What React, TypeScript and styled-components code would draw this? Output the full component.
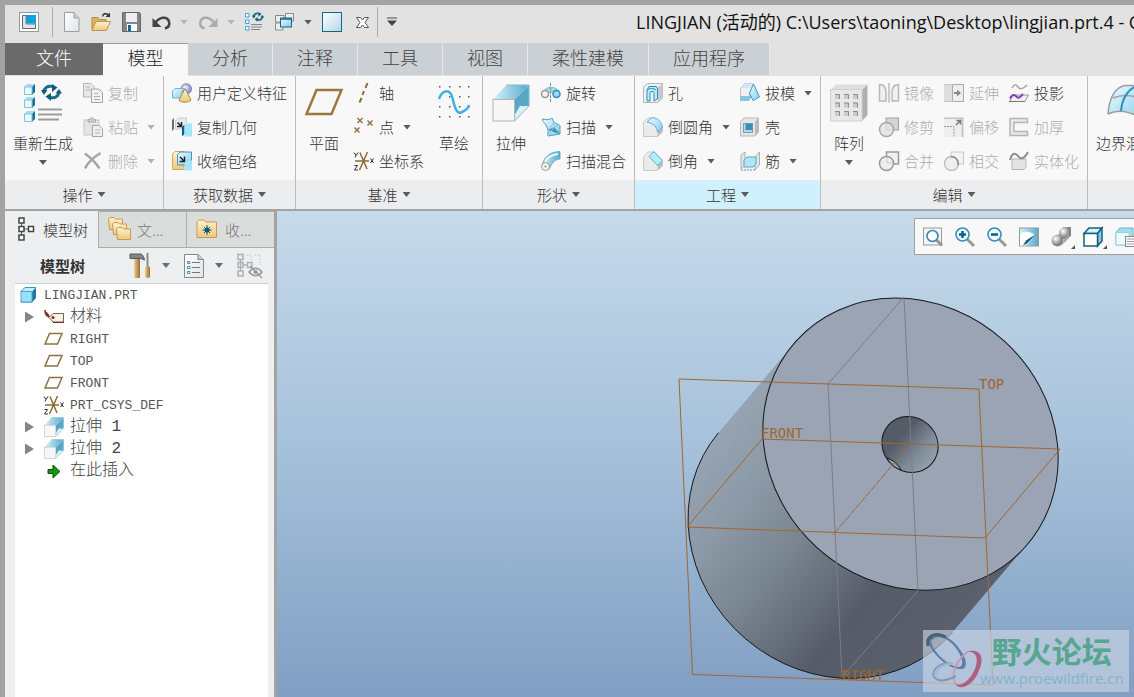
import React, { ReactNode } from "react";
import styled, { createGlobalStyle, css } from "styled-components";

const uiFont = `"Noto Sans CJK SC", "Open Sans", sans-serif`;

const GlobalStyle = createGlobalStyle`
  *, *::before, *::after { box-sizing: border-box; }
  html, body, #root { height: 100%; }
  body {
    margin: 0;
    overflow: hidden;
    font-family: ${uiFont};
    font-weight: 300;
    color: #333;
  }
  button {
    margin: 0;
    padding: 0;
    border: 0;
    background: none;
    font: inherit;
    color: inherit;
    white-space: nowrap;
  }
  svg { display: block; flex: none; overflow: visible; }
`;

const Window = styled.div`
  display: flex;
  flex-direction: column;
  height: 100vh;
  padding: 5px 0 0 5px;
  overflow: hidden;
  background: #a3a3a3;
`;

/* ---------- title bar ---------- */

const TitleBar = styled.header`
  display: grid;
  grid-template-columns: 631px 1fr;
  align-items: start;
  flex: none;
  height: 38px;
  background: #e2e2e2;
`;

const QuickAccess = styled.div`
  display: flex;
  align-items: center;
  gap: 10px;
  height: 34px;
  padding-left: 14px;
`;

const Divider = styled.span<{ $before?: number; $after?: number }>`
  width: 1px;
  height: 30px;
  margin-left: ${(p) => p.$before ?? 0}px;
  margin-right: ${(p) => p.$after ?? 0}px;
  background: #ababab;
`;

const Title = styled.h1`
  margin: 0;
  overflow: hidden;
  font-family: "Open Sans", "Noto Sans CJK SC", sans-serif;
  font-size: 18px;
  font-weight: 400;
  line-height: 34px;
  color: #111;
  white-space: nowrap;
`;

const IconButton = styled.button`
  display: flex;
  flex: none;
`;

const CaretButton = styled.button<{ $dim?: boolean }>`
  flex: none;
  width: 8px;
  height: 20px;
  margin-left: -1px;
  color: ${(p) => (p.$dim ? "#b5b5b5" : "#5b5b5b")};
`;

const Caret = styled.i`
  display: block;
  flex: none;
  width: 8px;
  height: 5px;
  background: currentColor;
  clip-path: polygon(0 0, 100% 0, 50% 100%);
`;

/* ---------- ribbon ---------- */

const TabBar = styled.nav`
  display: flex;
  flex: none;
  height: 33px;
  background: #e2e2e2;
`;

const Tab = styled.button<{ $kind?: "file" | "active"; $wide?: boolean }>`
  flex: none;
  width: ${(p) => (p.$wide ? 121 : 85)}px;
  height: 32px;
  padding-bottom: 4px;
  border-right: 1px solid #e6e8ea;
  background: #cbd0d4;
  font-size: 18px;
  line-height: 24px;
  color: #444;
  ${(p) =>
    p.$kind === "file" &&
    css`
      width: 98px;
      border: 0;
      background: #6a6a6a;
      color: #fff;
    `}
  ${(p) =>
    p.$kind === "active" &&
    css`
      height: 33px;
      padding-bottom: 6px;
      border: 0;
      border-top: 1px solid #9c9c9c;
      background: #f8f8f8;
      color: #222;
    `}
`;

const Ribbon = styled.section`
  display: flex;
  flex: none;
  height: 133px;
  background: #f8f8f8;
  overflow: hidden;
`;

const GroupBox = styled.div<{ $width: number }>`
  display: flex;
  flex-direction: column;
  flex: none;
  width: ${(p) => p.$width}px;
  border-right: 1px solid #bcbcbc;
`;

const GroupBody = styled.div`
  display: flex;
  flex: 1;
  gap: 10px;
  padding-left: 8px;
`;

const GroupLabel = styled.button<{ $hot?: boolean }>`
  display: flex;
  align-items: center;
  justify-content: center;
  gap: 5px;
  flex: none;
  height: 29px;
  background: ${(p) => (p.$hot ? "#d1f0fe" : "#ecedef")};
  font-size: 15px;
  ${Caret} { color: #5b5b5b; }
`;

const ButtonColumn = styled.div`
  display: grid;
  grid-template-rows: repeat(3, 34px);
  align-content: start;
  justify-items: start;
`;

const SmallButton = styled.button`
  display: flex;
  align-items: center;
  gap: 5px;
  font-size: 15px;
  line-height: 20px;
  &:disabled { color: #adadad; }
  ${Caret} { margin-left: 4px; color: #5b5b5b; }
  &:disabled ${Caret} { color: #b0b0b0; }
`;

const LargeButton = styled.button<{ $width: number }>`
  display: flex;
  flex-direction: column;
  align-items: center;
  flex: none;
  align-self: start;
  width: ${(p) => p.$width}px;
  padding-top: 8px;
  font-size: 15px;
  line-height: 20px;
  svg { margin-bottom: 11px; }
  ${Caret} { margin-top: 7px; color: #5b5b5b; }
`;

/* ---------- work area ---------- */

const WorkArea = styled.main`
  display: flex;
  flex: 1;
  min-height: 0;
  margin-top: 2px;
`;

const Sidebar = styled.aside`
  display: flex;
  flex-direction: column;
  flex: none;
  width: 269px;
  margin-right: 3px;
  background: #eeeff1;
`;

const SideTabs = styled.div`
  display: flex;
  flex: none;
  height: 37px;
`;

const SideTab = styled.button<{ $active?: boolean; $width: number }>`
  display: flex;
  align-items: center;
  gap: ${(p) => (p.$active ? 9 : 5)}px;
  width: ${(p) => p.$width}px;
  padding-left: ${(p) => (p.$active ? 13 : 9)}px;
  padding-bottom: 1px;
  border: ${(p) => (p.$active ? "0" : "1px solid #adadad")};
  border-right-width: 0;
  background: ${(p) => (p.$active ? "#eeeff1" : "#dbdddd")};
  color: ${(p) => (p.$active ? "#333" : "#777")};
  font-size: 15px;
`;

const TreeBar = styled.div`
  display: flex;
  align-items: center;
  flex: none;
  height: 35px;
  padding-left: 35px;
  h2 {
    flex: none;
    width: 89px;
    margin: 0;
    font-size: 15px;
    font-weight: 700;
    line-height: 20px;
  }
`;

const TreeTool = styled.button`
  display: flex;
  align-items: center;
  flex: none;
  gap: 11px;
  margin-right: 14px;
  ${Caret} { color: #6b6b6b; }
`;

const Tree = styled.ul`
  flex: 1;
  margin: 0 6px 0 10px;
  padding: 0;
  border-top: 1px solid #cfcfcf;
  background: #fff;
  list-style: none;
`;

const TreeItem = styled.li<{ $root?: boolean }>`
  display: flex;
  align-items: center;
  gap: 6px;
  height: 22px;
  padding-left: ${(p) => (p.$root ? 5 : 10)}px;
  font-family: "Liberation Mono", "Noto Sans CJK SC", monospace;
  font-size: 13px;
  white-space: pre;
  color: #555;
  b {
    font-size: 16px;
    font-weight: 300;
    line-height: 22px;
    color: #444;
  }
`;

const Expander = styled.button<{ $visible: boolean }>`
  width: 9px;
  height: 11px;
  margin-right: 4px;
  background: ${(p) => (p.$visible ? "#858585" : "transparent")};
  clip-path: polygon(0 0, 100% 50%, 0 100%);
`;

const Viewport = styled.section`
  position: relative;
  flex: 1;
  min-width: 0;
  overflow: hidden;
  background: linear-gradient(#c6dbea, #a5c0da 50%, #819fc3);
`;

const Scene = styled.svg`
  width: 100%;
  height: 100%;
`;

const ViewTools = styled.div`
  position: absolute;
  top: 7px;
  right: 0;
  display: flex;
  align-items: center;
  gap: 12px;
  width: 220px;
  height: 37px;
  padding-left: 8px;
  overflow: hidden;
  border: 1px solid #9f9f9f;
  border-right: 0;
  background: #f8f8f8;
`;

const Watermark = styled.div`
  position: absolute;
  right: 5px;
  bottom: 5px;
  display: flex;
  width: 206px;
  height: 62px;
  background: rgba(206, 217, 231, 0.62);
`;

const WatermarkText = styled.div`
  display: flex;
  flex-direction: column;
  align-items: center;
  margin-left: -3px;
  strong {
    height: 37px;
    font-size: 30px;
    font-weight: 700;
    line-height: 40px;
    color: #58a690;
  }
  span {
    font-family: "Open Sans", sans-serif;
    font-size: 15px;
    font-weight: 400;
    line-height: 22px;
    color: #86b2c8;
  }
`;

/* ---------- icons ---------- */

const Svg = ({ w = 20, h = 20, children }: { w?: number; h?: number; children: ReactNode }) => (
  <svg width={w} height={h} viewBox={`0 0 ${w} ${h}`} fill="none" aria-hidden="true">
    {children}
  </svg>
);

const Defs = styled.svg`
  position: absolute;
`;

const Gradients = () => (
  <Defs width="0" height="0" aria-hidden="true">
    <defs>
      <linearGradient id="paper" x1="0" y1="0" x2="1" y2="1"><stop stopColor="#fff" /><stop offset="1" stopColor="#dfe5e9" /></linearGradient>
      <linearGradient id="sand" x1="0" y1="0" x2="0" y2="1"><stop stopColor="#fff3cf" /><stop offset="1" stopColor="#edc77c" /></linearGradient>
      <linearGradient id="ice" x1="0" y1="0" x2="1" y2="1"><stop stopColor="#f0fbff" /><stop offset="1" stopColor="#7fcdec" /></linearGradient>
      <linearGradient id="sea" x1="0" y1="0" x2="1" y2="0"><stop stopColor="#d5f3fd" /><stop offset="1" stopColor="#5aa9c9" /></linearGradient>
      <linearGradient id="pane" x1="0" y1="0" x2="1" y2="1"><stop stopColor="#fff" /><stop offset="1" stopColor="#b5d6e4" /></linearGradient>
      <linearGradient id="wood" x1="0" y1="0" x2="1" y2="0"><stop stopColor="#f0d196" /><stop offset="1" stopColor="#9c6b2d" /></linearGradient>
      <radialGradient id="ball" cx=".35" cy=".35"><stop stopColor="#fff" /><stop offset="1" stopColor="#858585" /></radialGradient>
      <radialGradient id="lilac" cx=".4" cy=".4"><stop stopColor="#fff" /><stop offset="1" stopColor="#8890d0" /></radialGradient>
    </defs>
  </Defs>
);

const MiniCube = ({ x, y, s = 8 }: { x: number; y: number; s?: number }) => (
  <g transform={`translate(${x} ${y})`}>
    <path d={`M0 3L3 0H${s + 3}L${s} 3Z`} fill="#a6dcf2" />
    <path d={`M${s} 3L${s + 3} 0V${s}L${s} ${s + 3}Z`} fill="#1f6f92" />
    <path d={`M.5 3H${s}V${s + 2.5}H.5Z`} fill="#e9faff" stroke="#7ec4de" />
  </g>
);

const cycle = (
  <>
    <path d="M2.500 8.500C3 4 6.500 1.500 11 2.500" stroke="#1d6c8e" strokeWidth="3" />
    <path d="M11 0L16.500 3.500L11 8Z" fill="#125a7a" />
    <path d="M18 8C17.500 12.500 14 14.500 9.500 13.500" stroke="#1d6c8e" strokeWidth="3" />
    <path d="M10 9L4.500 12.500L10 17Z" fill="#125a7a" />
    <path d="M0 6H6.500L3 11Z" fill="#125a7a" />
    <path d="M14.500 9.500L18 5L21 9.500Z" fill="#125a7a" />
  </>
);

const regenLarge = (
  <Svg w={38} h={38}>
    <MiniCube x={0} y={0} /><MiniCube x={0} y={13} /><MiniCube x={0} y={27} />
    <g transform="translate(17 0)">{cycle}</g>
    <path d="M14 25.500H38M14 30.500H38M14 35.500H35" stroke="#9c9c9c" strokeWidth="2" />
  </Svg>
);
const planeLarge = (
  <Svg w={38} h={38}><path d="M11.500 6H36.500L26.500 30H1.500Z" stroke="#9a7a3c" strokeWidth="2.500" /></Svg>
);
const dots = [2, 12, 22, 32].flatMap((y) => [2, 12, 22, 31].map((x) => <rect key={`${x}-${y}`} x={x - 1} y={y} width="1.500" height="1.500" fill="#555" />));
const sketchLarge = (
  <Svg w={32} h={38}>{dots}<path d="M1 15C4 6 12 4 14.500 14C17 25 19 30 23 28.500C27 27 30 25 31 21" stroke="#3bb0e2" strokeWidth="2.500" /></Svg>
);
const extrudeShape = (
  <>
    <path d="M1 15.500L14.500 1H37L22.500 15.500Z" fill="url(#sea)" />
    <path d="M22.500 15.500L37 1V22L22.500 37Z" fill="#d8f3fd" />
    <path d="M22.500 15.500L37 1V22L22.500 31Z" fill="#5aa7c5" />
    <path d="M22.500 37V31L28 22H37Z" fill="#d3f2fd" />
    <path d="M22.500 37L37 22" stroke="#9fb8c2" />
    <path d="M14.500 1H37V22" stroke="#79bbd4" />
    <path d="M14.500 1V15" stroke="#a5d6e8" />
    <rect x="1" y="15.500" width="21.500" height="21.500" fill="#f7f7f7" stroke="#b3b3b3" />
  </>
);
const extrudeLarge = <Svg w={38} h={38}>{extrudeShape}</Svg>;
const patternLarge = (
  <Svg w={38} h={38}>
    <path d="M.5 6L6 .5H37.500L32 6Z" fill="#dedede" />
    <path d="M32 6L37.500 .5V31L32 37Z" fill="#b0b0b0" />
    <rect x=".5" y="5.500" width="31.500" height="31.500" fill="#e8e8e8" stroke="#d0d0d0" />
    {[10, 18.5, 27].flatMap((y) => [5, 14, 23].map((x) => (
      <g key={`${x}-${y}`}><rect x={x} y={y} width="5" height="5" fill="#cbcbcb" /><path d={`M${x} ${y + 0.5}H${x + 4.5}V${y + 5}`} stroke="#8c8c8c" /></g>
    )))}
  </Svg>
);
const blendLarge = (
  <Svg w={38} h={38}>
    <path d="M1 30C2 15 8 3 18 1.500H38V38C28 29 14 24 1 30Z" fill="url(#ice)" />
    <path d="M1 30C2 15 8 3 18 1.500H38M1 30C14 24 28 29 38 38M6 14C18 9 30 12 38 18" stroke="#9c9c9c" strokeWidth="1.500" />
    <path d="M14 27C15 15 20 6 30 1.500" stroke="#2f93bd" strokeWidth="2" />
  </Svg>
);

const flyout = <path d="M24 18V22H20Z" fill="#555" />;

const icons = {
  app: <Svg><rect x=".5" y=".5" width="19" height="19" fill="#fff" stroke="#999" /><path d="M3.500 3.500H16.500V16.500H3.500Z" fill="#e3e6e8" stroke="#666" /><path d="M7 3V12H17" stroke="#777" /><rect x="7" y="3" width="10" height="8.500" fill="#119fe0" /></Svg>,
  fresh: <Svg><path d="M3.500 .5H13L18 6V19.500H3.500Z" fill="url(#paper)" stroke="#9d9d9d" /><path d="M13 .5V6H18" fill="#ccd" stroke="#9d9d9d" /></Svg>,
  open: <Svg><path d="M1 18V5.500H7L8.500 7.500H15V10" fill="#e2b35d" stroke="#b98b3b" /><path d="M1 18.500L5 9.500H19.500L15.500 18.500Z" fill="url(#sand)" stroke="#c2954c" /><path d="M11.500 4.500C12 1.500 14.500 1 17 2.500" stroke="#333" strokeWidth="1.500" /><path d="M19 .5V5H14.500Z" fill="#333" /></Svg>,
  save: <Svg><path d="M1.500 .5H18.500L19.500 2V19.500H1.500Z" fill="#858585" stroke="#666" /><rect x="5" y="1" width="11" height="9" fill="#eceef0" /><rect x="6" y="12" width="10" height="7" fill="#fff" /><rect x="7" y="13" width="3" height="6" fill="#0e6aa0" /></Svg>,
  undo: <Svg><path d="M4 11.500C8 5 16 3.500 18 9.500C19 13 17 15.500 14 16.500" stroke="#444" strokeWidth="2.500" /><path d="M1.500 6V15H10.500Z" fill="#444" /></Svg>,
  redo: <Svg><path d="M16.500 11.500C12.500 5 4.500 3.500 2.500 9.500C1.500 13 3.500 15.500 6.500 16.500" stroke="#acacac" strokeWidth="2.500" /><path d="M19.500 6V15H10.500Z" fill="#acacac" /></Svg>,
  regen: <Svg><path d="M.5 1.500H4V5H.5ZM.5 8H4V11.500H.5ZM.5 14.500H4V18H.5Z" fill="#fff" stroke="#3aa4d3" /><g transform="translate(7 0) scale(.58)">{cycle}</g><path d="M6 12.500H17M6 15H17M6 17.500H15" stroke="#858585" /></Svg>,
  windows: <Svg><path d="M.5 3.500H9V10H.5ZM10.500 1.500H18.500V9H10.500ZM.5 11H8V18H.5Z" fill="#eee" stroke="#8b8b8b" /><rect x="5.500" y="6" width="11" height="9" fill="url(#ice)" stroke="#1a6585" /><path d="M5 7H17" stroke="#1a6585" strokeWidth="1.500" /></Svg>,
  pane: <Svg><rect x=".5" y=".5" width="19" height="19" fill="url(#pane)" stroke="#176488" /></Svg>,
  close: <Svg><path d="M4.500 5.500H8.500L10.500 8L12.500 5.500H16.500L13 10.500L16.500 15.500H12.500L10.500 13L8.500 15.500H4.500L8 10.500Z" fill="#fff" stroke="#555" /></Svg>,
  copy: <Svg><path d="M.5 .5H8L11 3.500V14H.5Z" fill="#e8e8e8" stroke="#b5b5b5" /><path d="M8.500 6H16L19.500 9.500V19.500H8.500Z" fill="#f1f1f1" stroke="#a5a5a5" /><path d="M2.500 4H7M2.500 7H8M11 10.500H15M11 13.500H17M11 16.500H17" stroke="#b0b0b0" /></Svg>,
  paste: <Svg><rect x="1" y="3" width="15" height="15" fill="#e4e4e4" stroke="#c5c5c5" /><path d="M5 5V2.500H7C7 0 10.500 0 10.500 2.500H12.500V5Z" fill="#cfcfcf" stroke="#aaa" /><path d="M9.500 8.500H16L19.500 12V19.500H9.500Z" fill="#f1f1f1" stroke="#a5a5a5" /><path d="M12 13H17M12 16H17" stroke="#b0b0b0" /></Svg>,
  remove: <Svg><path d="M2 2.500C8 7 13 12 16.500 17.500M17.500 2C11 6 5 11 2 17.500" stroke="#a6a6a6" strokeWidth="2.500" /></Svg>,
  udf: <Svg><path d="M9 6C9 -1 19.500 -1 19.500 6C19.500 11 14 12 11 10Z" fill="url(#lilac)" stroke="#888fbf" /><path d="M.5 8L3 5.500H12L10 8V15H.5Z" fill="url(#ice)" stroke="#6cbad6" /><path d="M13 5.500L19 17C17 20 9 20 7 17Z" fill="url(#sand)" stroke="#b08949" /></Svg>,
  copyGeom: <Svg><path d="M0 3L2 1V12L0 14Z" fill="#5e6f7a" /><path d="M3.500 4L6.500 1H14.500V9L11.500 12H3.500Z" fill="#e8e8e8" stroke="#cdcdcd" /><path d="M5.500 5.500L9 9M9.500 5V9.500H5" stroke="#222" strokeWidth="1.500" /><path d="M10 10L12.500 7.500V17L10 19.500Z" fill="#0f5d86" /><path d="M12.500 8.500L14.500 6.500H20V19.500H12.500Z" fill="#a5e6fb" /></Svg>,
  shrink: <Svg><path d="M.5 3L3 .5H12V18.500H.5Z" fill="url(#sand)" stroke="#d3aa5c" /><path d="M5.500 3.500L8 1H19.500V9L17 12V14H5.500Z" fill="url(#ice)" stroke="#4795b5" /><path d="M8 6L12 10M12.500 5.500V10.500H7.500" stroke="#222" strokeWidth="1.500" /><path d="M12.500 12L14.500 9.500H20V19.500H12.500Z" fill="#a5e6fb" /></Svg>,
  axis: <Svg><path d="M13.500 0L11.500 5M10 8L8.500 12M7.500 15L5.500 19.500" stroke="#8a6c35" strokeWidth="2" /></Svg>,
  point: <Svg><path d="M3.500 1L8.500 6M8.500 1L3.500 6M13.500 3.500L18.500 8.500M18.500 3.500L13.500 8.500M.5 10.500L5.500 15.500M5.500 10.500L.5 15.500" stroke="#927443" strokeWidth="1.500" /></Svg>,
  csys: <Svg><path d="M1 10H15M5.500 19L13.500 1M6 1.500L13 18" stroke="#8a6c35" strokeWidth="1.500" /><path d="M0 1.500L2 4.500L4 1.500M2 4.500L1 6.500M.5 14.500H3.500L.5 19H4M16.500 7.500L19.500 12M19.500 7.500L16.500 12" stroke="#333" /></Svg>,
  revolve: <Svg><path d="M3 8C5 3 15 3 17 8L13 10C11 8.500 9 8.500 7 10Z" fill="#a5d6e8" stroke="#7fbcd2" /><circle cx="4" cy="11" r="3.500" fill="#f4f4f4" stroke="#999" strokeWidth="1.500" /><circle cx="15.500" cy="11" r="3.500" fill="#9adcf5" stroke="#2e8fb5" strokeWidth="1.500" /><path d="M9.500 0V20" stroke="#888" strokeDasharray="3 1" /></Svg>,
  sweep: <Svg><path d="M1.500 2C6 3 9 3 11 1L13 5.500L19 8.500V17L7 19V13C6 9 4 6 1.500 4Z" fill="url(#ice)" stroke="#4f9ebb" /><path d="M7 13L13 10L19 17Z" fill="#3d93b4" /><path d="M7 13L13 5.500V10M7 19L13 10L19 8.500" stroke="#8fcade" /></Svg>,
  sweepBlend: <Svg><path d="M1 15C3 6 8 1 19 .5V8C13 8 11 13 8 18Z" fill="url(#sea)" stroke="#6aafc9" /><path d="M4 12C6 6 10 4 17 3" stroke="#f0fcff" strokeWidth="2" /><circle cx="4.500" cy="15.500" r="4" fill="#f2f2f2" stroke="#999" /><circle cx="4.500" cy="15.500" r="1" fill="#888" /></Svg>,
  hole: <Svg><path d="M.5 4L4.500 .5H19.500V15L15 19.500H.5Z" fill="#efefef" stroke="#b5b5b5" /><path d="M15 4.500L19.500 .5V15L15 19.500Z" fill="#c3c9cc" /><path d="M4 18V7L6 3.500H13.500L14.500 6V16L11 18V9.500C10 8 8 8 7 9.500V18Z" fill="#b9eafa" stroke="#2f8fb4" /><path d="M4 7C6 5 11 5 13 7" stroke="#2f8fb4" /></Svg>,
  round: <Svg><path d="M.5 5L5 1H9L19.500 10V15L14.500 19.500H.5Z" fill="#ebebeb" stroke="#cacaca" /><path d="M14.500 14.500L19.500 10V15L14.500 19.500Z" fill="#bdbdbd" /><path d="M4 5L9 .5C15 1 19 5 19.500 10.500L14.500 15C14 10 10 6 4 5Z" fill="url(#ice)" stroke="#5faecb" /></Svg>,
  chamfer: <Svg><path d="M.5 5.500L5 1H11L19.500 10V15L14.500 19.500H.5Z" fill="#ebebeb" stroke="#cacaca" /><path d="M14.500 14.500L19.500 10V15L14.500 19.500Z" fill="#bdbdbd" /><path d="M6 5.500L11 .5L19.500 9.500L14.500 14.500Z" fill="#b5eafb" stroke="#5faecb" /></Svg>,
  draft: <Svg><path d="M.5 6L4.500 .5H13L9 14H.5Z" fill="#f0f0f0" stroke="#c0c0c0" /><path d="M4.500 .5H13L11 5H1.500Z" fill="#c9ecf8" /><path d="M0 13H12L9 18H0Z" fill="#86c5dc" /><path d="M13.500 1L19.500 14L13 17.500L9.500 10Z" fill="url(#ice)" stroke="#3d9cc0" /></Svg>,
  shell: <Svg><path d="M.5 4.500L4 1H18.500V15L15 19H.5Z" fill="#e6e6e6" stroke="#b8b8b8" /><path d="M15 4.500L18.500 1V15L15 19Z" fill="#bbb" /><rect x="3.500" y="6.500" width="9" height="9" fill="#a9dcf0" stroke="#8b9ba3" /><rect x="5.500" y="6.500" width="7" height="6.500" fill="#3c8fb4" /></Svg>,
  rib: <Svg><path d="M1 4L5 1V14L1 18ZM15 6L19.500 1V14L15 19Z" fill="#e5e5e5" stroke="#b0b0b0" /><path d="M1 19H15" stroke="#888" strokeDasharray="2 1" /><path d="M4 9L7 6H16V13L13 16H4Z" fill="#b1e6f8" stroke="#53a6c6" /></Svg>,
  mirror: <Svg><path d="M.5 1.500C5 1.500 7 5 7 10V18H.5ZM19.500 1.500C15 1.500 13 5 13 10V18H19.500Z" fill="#f0f0f0" stroke="#b8b8b8" strokeWidth="1.500" /><path d="M10 0V20" stroke="#a0a0a0" /></Svg>,
  trim: <Svg><rect x="7" y="1" width="12.500" height="12" fill="#d5d5d5" stroke="#a0a0a0" /><circle cx="7.500" cy="12.500" r="7" fill="#e3e3e3" fillOpacity=".8" stroke="#a8a8a8" strokeWidth="1.500" /></Svg>,
  merge: <Svg><rect x="7.500" y="1" width="12" height="12" fill="#efefef" stroke="#999" strokeWidth="1.500" /><circle cx="7.500" cy="12.500" r="7" fill="#eee" stroke="#999" strokeWidth="1.500" /><path d="M8 7V12H13" stroke="#ccc" /></Svg>,
  extend: <Svg><rect x="0" y="1" width="9" height="18" fill="#dedede" /><rect x="8.500" y="1.500" width="11" height="17" fill="#eee" stroke="#aaa" /><path d="M0 1.500H9M0 18.500H9" stroke="#c5c5c5" /><path d="M10 10H14" stroke="#888" strokeWidth="2" /><path d="M13 6.500L17 10L13 13.500Z" fill="#888" /></Svg>,
  offset: <Svg><path d="M0 1.500H18.500V20" stroke="#c3c3c3" strokeWidth="2" /><rect x="0" y="2" width="17" height="18" fill="#efefef" /><path d="M0 9.500H10V20" stroke="#999" strokeDasharray="2 1" /><path d="M12 8L16 4M12.500 3.500H16.500V7.500" stroke="#777" strokeWidth="1.500" /></Svg>,
  intersect: <Svg><rect x="7" y="1" width="12.500" height="12" fill="#f3f3f3" stroke="#c9c9c9" /><circle cx="7.500" cy="12.500" r="7" fill="#efefef" stroke="#c0c0c0" strokeWidth="1.500" /><path d="M6.500 5.500C12 5.500 14.500 9 14 14" stroke="#888" strokeWidth="1.500" /></Svg>,
  project: <Svg><path d="M3 5C5 1 7 1 9 4C11 7 14 6 18 2" stroke="#a5a5a5" strokeWidth="1.500" /><path d="M1 18.500L3 12H19.500L16 18.500Z" fill="#eee" stroke="#999" /><path d="M0 18.500H16" stroke="#777" /><path d="M1 15.500C4 10 6 12 8 14C10 16 12 13 14 11" stroke="#7b43b5" strokeWidth="2" /></Svg>,
  thicken: <Svg><path d="M1 1.500H18.500V5.500H5V14.500H18.500V18.500H1Z" fill="#e9e9e9" stroke="#b5b5b5" strokeWidth="1.500" /></Svg>,
  solidify: <Svg><path d="M3 8H17V16L15 18.500H3Z" fill="#e4e4e4" stroke="#b5b5b5" /><path d="M1 9C3 2 6 1 9 5C12 9 15 8 19 1" stroke="#8c8c8c" strokeWidth="2" /></Svg>,
  zoomFit: <Svg><rect x=".5" y="1" width="18" height="17" fill="#f4f4f4" stroke="#999" /><path d="M13.500 13L19 18.500" stroke="#959595" strokeWidth="3" /><circle cx="9.500" cy="9" r="5.500" fill="#fff" stroke="#2f86aa" strokeWidth="1.500" /></Svg>,
  zoomIn: <Svg><path d="M12 12L19 19" stroke="#999" strokeWidth="3" /><circle cx="7.500" cy="7.500" r="6.500" fill="#eafaff" stroke="#3a8db0" strokeWidth="1.500" /><path d="M4 7.500H11M7.500 4V11" stroke="#0f5e83" strokeWidth="2.500" /></Svg>,
  zoomOut: <Svg><path d="M12 12L19 19" stroke="#999" strokeWidth="3" /><circle cx="7.500" cy="7.500" r="6.500" fill="#eafaff" stroke="#3a8db0" strokeWidth="1.500" /><path d="M4 7.500H11" stroke="#0f5e83" strokeWidth="2.500" /></Svg>,
  repaint: <Svg><rect x=".5" y="1" width="19" height="18" fill="url(#sea)" stroke="#999" /><path d="M1 7C6 3 12 5 16 8L7 18.500H1Z" fill="#fff" /><path d="M17 7L8 16.500L4 18.500L7 13.500Z" fill="#145f83" /></Svg>,
  shading: <Svg><path d="M8 4L12 0H20V9L16 12H8Z" fill="url(#ball)" /><circle cx="6.500" cy="13.500" r="6" fill="url(#ball)" /><path d="M13 12L18 7V11L12 17Z" fill="#a5a5a5" />{flyout}</Svg>,
  box: <Svg><path d="M1 6.500L6 1H19L14.500 6.500Z" fill="#d5f1fb" stroke="#14607f" strokeWidth="1.500" /><path d="M14.500 6.500L19 1V14L14.500 19Z" fill="#8cc8df" stroke="#14607f" strokeWidth="1.500" /><rect x="1" y="6.500" width="13.500" height="12.500" fill="#fff" stroke="#14607f" strokeWidth="1.500" />{flyout}</Svg>,
  views: <Svg w={22}><path d="M1 5.500L5 1H18V14L14 18H1Z" fill="#a5dcf0" stroke="#6bb5d0" /><path d="M1 5.500H14V18H1Z" fill="#effbff" stroke="#9bd0e4" /><rect x="10.500" y="9.500" width="11" height="10" fill="#fff" stroke="#888" /><path d="M12 12H20M12 14.500H20M12 17H20" stroke="#999" /></Svg>,
  tree: <Svg w={16} h={24}><path d="M3.500 6V18M6 12H11" stroke="#555" /><path d="M1 1H6V6H1ZM1 9.500H6V14.500H1ZM1 18H6V23H1ZM10.500 9.500H15.500V14.500H10.500Z" fill="#fff" stroke="#444" strokeWidth="1.500" /></Svg>,
  folders: <Svg w={24} h={24}>{[[0, 0], [4, 5], [8, 10]].map(([x, y]) => <path key={x} d={`M${x + 0.5} ${y + 2}L${x + 2} ${y + 0.5}H${x + 6}L${x + 7.5} ${y + 2}H${x + 14.5}V${y + 12.5}H${x + 1.5}Z`} fill="url(#sand)" stroke="#c69a52" />)}</Svg>,
  favorites: <Svg w={24} h={20}><path d="M1 2.500L2.500 1H8L10 3H20.500V18.500H1Z" fill="url(#sand)" stroke="#c69a52" /><path d="M11 6V16M6.500 11H15.500M8 8L14 14M14 8L8 14" stroke="#0f5575" /><circle cx="11" cy="11" r="2.500" fill="#0f5575" /></Svg>,
  hammer: <Svg w={22} h={26}><rect x="5" y="5" width="6" height="20" rx="1" fill="url(#wood)" /><path d="M1 1H12C14 2 15 4 15.500 7L12 5.500H1Z" fill="#80868b" stroke="#55595c" /><path d="M18.500 0V13" stroke="#8b8b8b" strokeWidth="2" /><rect x="16" y="13" width="5" height="12" rx="2" fill="url(#wood)" /></Svg>,
  list: <Svg w={20} h={26}><path d="M.5 1.500H14L19.500 6.500V24.500H.5Z" fill="url(#paper)" stroke="#888" /><path d="M14 1.500V6.500H19.500" stroke="#888" fill="#ccc" /><path d="M8 9.500H16M8 14.500H16M8 19.500H16" stroke="#777" /><path d="M3.500 8.500H6V10.500H3.500ZM3.500 13.500H6V15.500H3.500ZM3.500 18.500H6V20.500H3.500Z" stroke="#4b91ad" fill="#fff" /></Svg>,
  hidden: <Svg w={26} h={26}><path d="M1 1.500H6V6.500H1ZM1 9.500H6V14.500H1ZM1 18H6V23H1ZM10.500 9.500H15V14.500H10.500ZM3.500 6.500V18M6 12H10.500" stroke="#b0b0b0" strokeWidth="1.500" /><path d="M9 2H14V7M17 2H23V12" stroke="#ccc" strokeDasharray="2 1" /><path d="M12 19C16 14 21 14 25 19C21 24 16 24 12 19Z" fill="#eee" stroke="#999" strokeWidth="1.500" /><circle cx="18.500" cy="19" r="2" fill="#999" /><path d="M13 13L25 25" stroke="#999" strokeWidth="1.500" /></Svg>,
  part: <Svg w={18} h={18}><path d="M1 5.500L5 1.500H16V12L12 16.500H1Z" fill="#1c789c" /><path d="M1 5.500L5 1.500H16L12.500 5.500Z" fill="#c2efff" stroke="#3d97b8" /><rect x="1" y="5.500" width="11" height="10.500" fill="#99e1fa" stroke="#4ba5c5" /></Svg>,
  material: <Svg><path d="M1 3C1 9 4 10.500 9 10M1 5C3 5 4 8 5 9" stroke="#7a3628" strokeWidth="1.500" /><path d="M5 10.500L9 6.500H19.500V15H9Z" fill="#f7f3e6" stroke="#7b6048" /><circle cx="9" cy="10.500" r="1.500" fill="#8b2a1d" /><path d="M9 15.500H20" stroke="#8b2a1d" /></Svg>,
  plane: <Svg><path d="M5.500 4.500H18L13.500 15H1Z" stroke="#8f7140" strokeWidth="1.500" /></Svg>,
  extrude: <svg width="20" height="20" viewBox="0 0 38 38" fill="none" aria-hidden="true">{extrudeShape}</svg>,
  insert: <Svg><path d="M4 8.500H9V4L16 10.500L9 17V12.500H4Z" fill="#159515" stroke="#075507" /></Svg>,
};

type IconName = keyof typeof icons;

/* ---------- composed parts ---------- */

interface Cmd { icon: IconName; label: string; caret?: boolean; off?: boolean }

const Column = ({ items }: { items: Cmd[] }) => (
  <ButtonColumn>
    {items.map((c) => (
      <SmallButton key={c.label} disabled={c.off}>
        {icons[c.icon]}
        {c.label}
        {c.caret && <Caret />}
      </SmallButton>
    ))}
  </ButtonColumn>
);

const Group = ({ width, label, hot, children }: { width: number; label?: string; hot?: boolean; children: ReactNode }) => (
  <GroupBox $width={width}>
    <GroupBody>{children}</GroupBody>
    <GroupLabel $hot={hot}>{label}{label && <Caret />}</GroupLabel>
  </GroupBox>
);

const QuickIcon = ({ name, label }: { name: IconName; label: string }) => (
  <IconButton aria-label={label}>{icons[name]}</IconButton>
);

const treeRows: { icon: IconName; text: string; cjk?: boolean; open?: boolean }[] = [
  { icon: "material", text: "材料", cjk: true, open: true },
  { icon: "plane", text: "RIGHT" },
  { icon: "plane", text: "TOP" },
  { icon: "plane", text: "FRONT" },
  { icon: "csys", text: "PRT_CSYS_DEF" },
  { icon: "extrude", text: "拉伸 1", cjk: true, open: true },
  { icon: "extrude", text: "拉伸 2", cjk: true, open: true },
  { icon: "insert", text: "在此插入", cjk: true },
];

const Model = () => (
  <Scene viewBox="277 211 857 486" preserveAspectRatio="xMidYMid meet" role="img" aria-label="LINGJIAN.PRT">
    <defs>
      <linearGradient id="body" gradientUnits="userSpaceOnUse" x1="793" y1="345" x2="1028" y2="543">
        <stop stopColor="#96a3b2" /><stop offset=".2" stopColor="#8c99a6" /><stop offset=".42" stopColor="#79858f" />
        <stop offset=".6" stopColor="#646d78" /><stop offset=".72" stopColor="#565c67" /><stop offset="1" stopColor="#5b616c" />
      </linearGradient>
      <linearGradient id="bore" gradientUnits="userSpaceOnUse" x1="-29" y1="0" x2="29" y2="0">
        <stop stopColor="#565c67" /><stop offset=".3" stopColor="#565c67" /><stop offset=".7" stopColor="#7f8b98" /><stop offset="1" stopColor="#929fac" />
      </linearGradient>
    </defs>
    <path d="M793.500 344.200L718.500 432.700A153 138.600 42 0 0 952.500 632.300L1027.500 543.800Z" fill="url(#body)" />
    <path d="M718.500 432.700A153 138.600 42 0 0 952.500 632.300" fill="none" stroke="#14171b" />
    <ellipse rx="154" ry="139.400" transform="translate(910.500 444.200) rotate(42)" fill="#9aa4b5" stroke="#14171b" />
    <ellipse rx="29" ry="27" transform="translate(910 444.500) rotate(42)" fill="url(#bore)" stroke="#14171b" />
    <path d="M887 458C893 460 898 464 901 470C895 468 890 464 887 458Z" fill="#8f9dae" stroke="#14171b" />
    <path d="M904 297L828 384L842 677L918 591Z" fill="none" stroke="#7b7d89" />
    <g fill="none" stroke="#a2662e">
      <path d="M679 379L979 389L993 685L692.500 674.500Z" />
      <path d="M762 439L1060 449L985 538L687 527Z" />
      <path d="M912 442L833 535" strokeDasharray="7 1" />
    </g>
    <g fill="#a2662e" fontFamily="'DejaVu Sans Mono', monospace" fontSize="14">
      <text x="979" y="389">TOP</text>
      <text x="761" y="438">FRONT</text>
      <text x="842" y="680">RIGHT</text>
    </g>
  </Scene>
);

const WatermarkLogo = () => (
  <Svg w={60} h={62}>
    <path fillRule="evenodd" fill="#5c7fa5" d="M4 8C12 0 28 5 38 21C45 31 44 40 38 39C27 40 7 24 4 8ZM8 11C10 23 27 37 36 37C41 36 40 29 35 21C27 8 14 3 8 11Z" />
    <path d="M5 16C3 5 13 2 23 7" stroke="#4a6076" strokeWidth="3" />
    <path fillRule="evenodd" fill="#b0607f" d="M43 22C57 17 63 27 55 43C49 56 37 61 32 54C38 57 46 51 51 41C57 28 53 20 43 22Z" />
    <path d="M33 54C27 46 32 30 46 21" stroke="#c795aa" strokeWidth="1.500" />
    <path d="M30 34C16 30 6 43 12 48C17 53 27 49 33 46" stroke="#7d9cbc" strokeWidth="2" />
    <path d="M30 34C20 33 13 39 12 47" stroke="#a2b7cf" strokeWidth="2" />
  </Svg>
);

export default function App() {
  return (
    <Window>
      <GlobalStyle />
      <Gradients />
      <TitleBar>
        <QuickAccess>
          <QuickIcon name="app" label="窗口" />
          <Divider $before={3} $after={-2} />
          <QuickIcon name="fresh" label="新建" />
          <QuickIcon name="open" label="打开" />
          <QuickIcon name="save" label="保存" />
          <QuickIcon name="undo" label="撤消" />
          <CaretButton $dim aria-label="撤消列表"><Caret /></CaretButton>
          <QuickIcon name="redo" label="重做" />
          <CaretButton $dim aria-label="重做列表"><Caret /></CaretButton>
          <QuickIcon name="regen" label="重新生成" />
          <QuickIcon name="windows" label="窗口" />
          <CaretButton aria-label="窗口列表"><Caret /></CaretButton>
          <QuickIcon name="pane" label="激活" />
          <QuickIcon name="close" label="关闭" />
          <Divider $before={-5} $after={-1} />
          <IconButton aria-label="自定义">
            <Svg w={10} h={10}><path d="M0 1H10" stroke="#444" /><path d="M0 3.500H10L5 9Z" fill="#444" /></Svg>
          </IconButton>
        </QuickAccess>
        <Title>LINGJIAN (活动的) C:\Users\taoning\Desktop\lingjian.prt.4 - C</Title>
      </TitleBar>

      <TabBar>
        <Tab $kind="file">文件</Tab>
        <Tab $kind="active">模型</Tab>
        <Tab>分析</Tab>
        <Tab>注释</Tab>
        <Tab>工具</Tab>
        <Tab>视图</Tab>
        <Tab $wide>柔性建模</Tab>
        <Tab $wide>应用程序</Tab>
      </TabBar>

      <Ribbon>
        <Group width={159} label="操作">
          <LargeButton $width={60}>{regenLarge}重新生成<Caret /></LargeButton>
          <Column items={[{ icon: "copy", label: "复制", off: true }, { icon: "paste", label: "粘贴", off: true, caret: true }, { icon: "remove", label: "删除", off: true, caret: true }]} />
        </Group>
        <Group width={132} label="获取数据">
          <Column items={[{ icon: "udf", label: "用户定义特征" }, { icon: "copyGeom", label: "复制几何" }, { icon: "shrink", label: "收缩包络" }]} />
        </Group>
        <Group width={187} label="基准">
          <LargeButton $width={40}>{planeLarge}平面</LargeButton>
          <Column items={[{ icon: "axis", label: "轴" }, { icon: "point", label: "点", caret: true }, { icon: "csys", label: "坐标系" }]} />
          <LargeButton $width={40}>{sketchLarge}草绘</LargeButton>
        </Group>
        <Group width={152} label="形状">
          <LargeButton $width={40}>{extrudeLarge}拉伸</LargeButton>
          <Column items={[{ icon: "revolve", label: "旋转" }, { icon: "sweep", label: "扫描", caret: true }, { icon: "sweepBlend", label: "扫描混合" }]} />
        </Group>
        <Group width={186} label="工程" hot>
          <Column items={[{ icon: "hole", label: "孔" }, { icon: "round", label: "倒圆角", caret: true }, { icon: "chamfer", label: "倒角", caret: true }]} />
          <Column items={[{ icon: "draft", label: "拔模", caret: true }, { icon: "shell", label: "壳" }, { icon: "rib", label: "筋", caret: true }]} />
        </Group>
        <Group width={267} label="编辑">
          <LargeButton $width={40}>{patternLarge}阵列<Caret /></LargeButton>
          <Column items={[{ icon: "mirror", label: "镜像", off: true }, { icon: "trim", label: "修剪", off: true }, { icon: "merge", label: "合并", off: true }]} />
          <Column items={[{ icon: "extend", label: "延伸", off: true }, { icon: "offset", label: "偏移", off: true }, { icon: "intersect", label: "相交", off: true }]} />
          <Column items={[{ icon: "project", label: "投影" }, { icon: "thicken", label: "加厚", off: true }, { icon: "solidify", label: "实体化", off: true }]} />
        </Group>
        <Group width={180}>
          <LargeButton $width={60}>{blendLarge}边界混合</LargeButton>
        </Group>
      </Ribbon>

      <WorkArea>
        <Sidebar>
          <SideTabs>
            <SideTab $active $width={93}>{icons.tree}模型树</SideTab>
            <SideTab $width={88}>{icons.folders}文...</SideTab>
            <SideTab $width={88}>{icons.favorites}收...</SideTab>
          </SideTabs>
          <TreeBar>
            <h2>模型树</h2>
            <TreeTool aria-label="设置">{icons.hammer}<Caret /></TreeTool>
            <TreeTool aria-label="显示">{icons.list}<Caret /></TreeTool>
            <TreeTool aria-label="隐藏">{icons.hidden}</TreeTool>
          </TreeBar>
          <Tree>
            <TreeItem $root>{icons.part}LINGJIAN.PRT</TreeItem>
            {treeRows.map((r) => (
              <TreeItem key={r.text}>
                <Expander $visible={!!r.open} disabled={!r.open} aria-label="展开" />
                {icons[r.icon]}
                {r.cjk ? <b>{r.text}</b> : r.text}
              </TreeItem>
            ))}
          </Tree>
        </Sidebar>

        <Viewport>
          <Model />
          <ViewTools>
            <QuickIcon name="zoomFit" label="重新调整" />
            <QuickIcon name="zoomIn" label="放大" />
            <QuickIcon name="zoomOut" label="缩小" />
            <QuickIcon name="repaint" label="重画" />
            <QuickIcon name="shading" label="显示样式" />
            <QuickIcon name="box" label="视图方向" />
            <QuickIcon name="views" label="视图管理器" />
          </ViewTools>
          <Watermark>
            <WatermarkLogo />
            <WatermarkText>
              <strong>野火论坛</strong>
              <span>www.proewildfire.cn</span>
            </WatermarkText>
          </Watermark>
        </Viewport>
      </WorkArea>
    </Window>
  );
}
